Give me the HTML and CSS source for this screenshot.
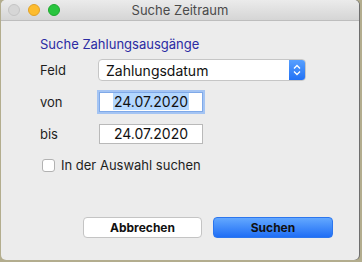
FILE: index.html
```html
<!DOCTYPE html>
<html lang="de">
<head>
  <meta charset="UTF-8" />
  <title>Suche Zeitraum</title>
  <link rel="stylesheet" href="styles.css">
</head>
<body>

  <div class="window">
    <div class="titlebar">
      <div class="lights">
        <span class="light close"></span>
        <span class="light min"></span>
        <span class="light max"></span>
      </div>
      <div class="title">Suche Zeitraum</div>
      <div></div>
    </div>

    <div class="content">
      <div class="heading">Suche Zahlungsausgänge</div>

      <div class="row row-feld">
        <div class="label">Feld</div>
        <div class="select">
          <span class="select-text">Zahlungsdatum</span>
          <span class="stepper">
            <svg width="8" height="12" viewBox="0 0 8 12">
              <path d="M1 4.5 L4 1.5 L7 4.5 M1 7.5 L4 10.5 L7 7.5" fill="none" stroke="#fff" stroke-width="1.3"/>
            </svg>
          </span>
        </div>
      </div>

      <div class="row row-von">
        <div class="label">von</div>
        <div class="field focused"><span class="selected">24.07.2020</span></div>
      </div>

      <div class="row row-bis">
        <div class="label">bis</div>
        <div class="field">24.07.2020</div>
      </div>

      <div class="check-row">
        <span class="checkbox"></span>
        <span>In der Auswahl suchen</span>
      </div>

      <div class="buttons">
        <div class="btn">Abbrechen</div>
        <div class="btn primary">Suchen</div>
      </div>
    </div>
  </div>

</body>
</html>
```

FILE: styles.css
```css
body {
  margin: 0;
  background-color: #b3ad8e;
  font-family: Inter, "Noto Sans", sans-serif;
  font-size: 13px;
  color: #1e1e1e;
}
.window {
  width: 358px;
  height: 260px;
  margin-left: 1px;
  background-color: #ececec;
  border-radius: 5px;
  overflow: hidden;
  box-shadow: 1px 0 0 #6e6e6e;
}
.titlebar {
  height: 20px;
  display: grid;
  grid-template-columns: 1fr auto 1fr;
  align-items: center;
  background: linear-gradient(#ebebeb, #d5d5d5);
  border-bottom: 1px solid #bdbdbd;
}
.lights {
  display: flex;
  gap: 8px;
  padding-left: 7px;
}
.light {
  width: 12px;
  height: 12px;
  border-radius: 50%;
  box-sizing: border-box;
}
.close {
  background-color: #d6d6d6;
  border: 1px solid #c4c4c4;
}
.min {
  background-color: #fdbc2e;
  border: 1px solid #e0a127;
}
.max {
  background-color: #29c53f;
  border: 1px solid #1fa830;
}
.title {
  color: #4a4a4a;
  font-size: 13px;
}
.content {
  padding: 15px 0 0 39px;
}
.heading {
  color: #2b2ba3;
  line-height: 16px;
  height: 16px;
}
.row {
  display: flex;
  align-items: center;
}
.label {
  width: 58px;
}
.row-feld {
  margin-top: 7px;
  height: 22px;
}
.row-von {
  margin-top: 10px;
  height: 21px;
}
.row-bis {
  margin-top: 11px;
  height: 21px;
}
.select {
  width: 208px;
  height: 22px;
  box-sizing: border-box;
  display: flex;
  align-items: center;
  background-color: #fff;
  border: 1px solid #c6c6c6;
  border-radius: 4px;
  overflow: hidden;
}
.select-text {
  flex: 1;
  padding-left: 7px;
  font-size: 14px;
  color: #111;
}
.stepper {
  width: 16px;
  height: 22px;
  display: flex;
  align-items: center;
  justify-content: center;
  background: linear-gradient(#5aa2ff, #1f6ff5);
}
.field {
  width: 104px;
  height: 20px;
  margin-left: 1px;
  box-sizing: border-box;
  display: flex;
  align-items: center;
  justify-content: center;
  background-color: #fff;
  border: 1px solid #b9b9b9;
  font-size: 14px;
  color: #111;
}
.focused {
  border-color: #7fa9e8;
  box-shadow: 0 0 0 2px #a4c4f3;
}
.selected {
  background-color: #b3d7ff;
  padding: 0 1px;
}
.check-row {
  margin-top: 14px;
  display: flex;
  align-items: center;
  gap: 6px;
  margin-left: 2px;
  height: 14px;
}
.checkbox {
  width: 13px;
  height: 13px;
  box-sizing: border-box;
  background-color: #fff;
  border: 1px solid #b2b2b2;
  border-radius: 3px;
}
.buttons {
  margin-top: 45px;
  margin-left: 43px;
  display: flex;
  gap: 11px;
}
.btn {
  width: 119px;
  height: 21px;
  box-sizing: border-box;
  display: flex;
  align-items: center;
  justify-content: center;
  font-weight: bold;
  font-size: 12px;
  color: #111;
  background-color: #fff;
  border: 1px solid #c4c4c4;
  border-radius: 4px;
}
.primary {
  width: 120px;
  border-color: #2c76ee;
  background: linear-gradient(#63a8ff, #1f6ef5);
}
```
